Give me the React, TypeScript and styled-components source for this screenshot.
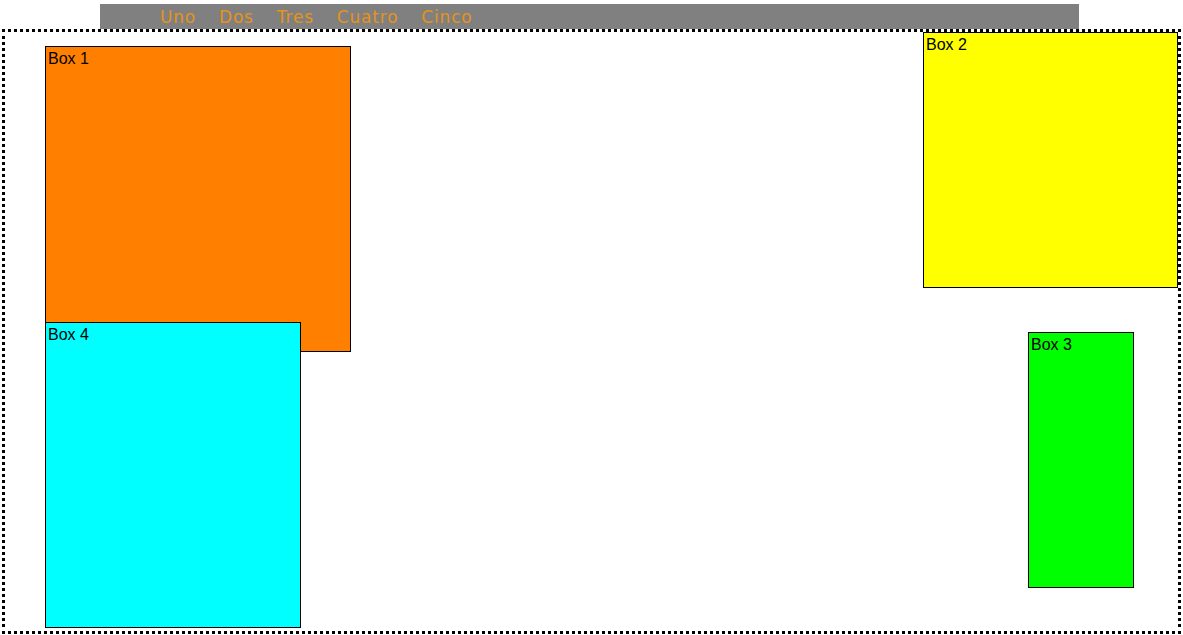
import React from "react";
import styled, { createGlobalStyle } from "styled-components";

const Global = createGlobalStyle`
  html, body { margin: 0; padding: 0; background: #ffffff; }
  body { font-family: "Liberation Sans", Arial, sans-serif; }
`;

const Page = styled.div`
  display: flex;
  flex-direction: column;
  padding-top: 4px;
`;

const Nav = styled.nav`
  margin-left: 100px;
  width: 979px;
  height: 25px;
  background: #808080;
  display: flex;
  align-items: center;
  padding-left: 60px;
  box-sizing: border-box;
  gap: 23px;
`;

const NavItem = styled.a`
  font-family: "DejaVu Sans", Verdana, sans-serif;
  font-size: 17px;
  letter-spacing: 0.8px;
  color: #e5931a;
  text-decoration: none;
  line-height: 25px;
  padding-top: 1px;
`;

const Canvas = styled.div`
  position: relative;
  margin: 0 2px;
  height: 599px;
  border: 3px dotted #000000;
`;

const Box = styled.div<{ $bg: string; $w: number; $h: number }>`
  position: absolute;
  width: ${(p) => p.$w}px;
  height: ${(p) => p.$h}px;
  padding: 3px 2px 1px 2px;
  border: 1px solid #000000;
  background: ${(p) => p.$bg};
  font-family: "Liberation Sans", Arial, sans-serif;
  font-size: 16px;
  color: #000000;
`;

const boxes = [
  { label: "Box 1", bg: "#ff8000", w: 300, h: 300, pos: { left: 40, top: 14 } },
  { label: "Box 2", bg: "#ffff00", w: 249, h: 250, pos: { right: 0, top: 0 } },
  { label: "Box 3", bg: "#00ff00", w: 100, h: 250, pos: { left: 1023, top: 300 } },
  { label: "Box 4", bg: "#00ffff", w: 250, h: 300, pos: { left: 40, top: 290 } },
];

export default function App() {
  return (
    <Page>
      <Global />
      <Nav>
        {["Uno", "Dos", "Tres", "Cuatro", "Cinco"].map((t) => (
          <NavItem key={t} href="#">
            {t}
          </NavItem>
        ))}
      </Nav>
      <Canvas>
        {boxes.map((b) => (
          <Box key={b.label} $bg={b.bg} $w={b.w} $h={b.h} style={b.pos}>
            {b.label}
          </Box>
        ))}
      </Canvas>
    </Page>
  );
}
